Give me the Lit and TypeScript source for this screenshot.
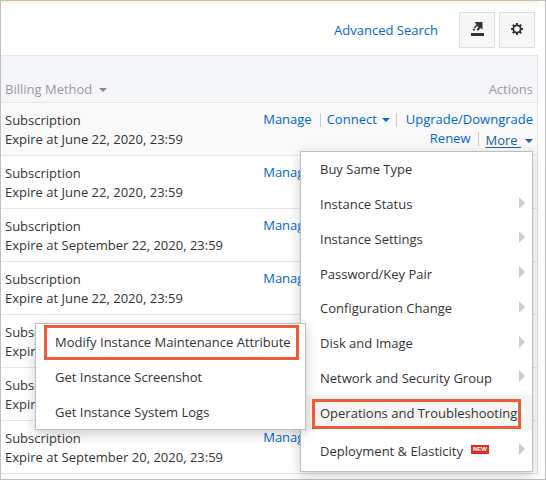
import { LitElement, html, css, nothing, svg } from "lit";
import { customElement, property } from "lit/decorators.js";
import { classMap } from "lit/directives/class-map.js";

interface MenuEntry {
  label: string;
  leaf?: boolean;
  active?: boolean;
  isNew?: boolean;
}

const MENU: MenuEntry[] = [
  { label: "Buy Same Type", leaf: true },
  { label: "Instance Status" },
  { label: "Instance Settings" },
  { label: "Password/Key Pair" },
  { label: "Configuration Change" },
  { label: "Disk and Image" },
  { label: "Network and Security Group" },
  { label: "Operations and Troubleshooting", active: true },
  { label: "Deployment & Elasticity", isNew: true },
];

const SUBMENU = [
  "Modify Instance Maintenance Attribute",
  "Get Instance Screenshot",
  "Get Instance System Logs",
];

const EXPIRY = [
  "June 22, 2020, 23:59",
  "June 22, 2020, 23:59",
  "September 22, 2020, 23:59",
  "June 22, 2020, 23:59",
  "June 22, 2020, 23:59",
  "June 22, 2020, 23:59",
  "September 20, 2020, 23:59",
];

@customElement("actions-menu")
export class ActionsMenu extends LitElement {
  static styles = css`
    :host {
      display: block;
      box-sizing: border-box;
      width: 233px;
      background: #fff;
      border: 1px solid #bfbfbf;
      box-shadow: 0 4px 12px rgba(0, 0, 0, 0.2);
      color: #333;
      text-align: left;
    }
    ul {
      list-style: none;
      margin: 0;
      padding: 0;
    }
    .main {
      display: grid;
      grid-template-rows: repeat(8, 1fr) 41px;
      min-height: 319px;
    }
    .item {
      position: relative;
      display: grid;
    }
    .item.active {
      background: #f5f5f5;
    }
    .entry {
      display: flex;
      align-items: center;
      min-height: 34px;
      width: 100%;
      padding: 1px 7px 0 19px;
      border: 0;
      background: none;
      font: inherit;
      line-height: 19px;
      color: inherit;
      text-align: left;
      white-space: nowrap;
      box-sizing: border-box;
      cursor: pointer;
    }
    .arrow {
      margin-left: auto;
      margin-bottom: 4px;
      border: 6px solid transparent;
      border-left-color: #ccc;
      border-right-width: 0;
    }
    .active .arrow {
      border-left-color: #fff;
    }
    .new {
      margin-left: 8px;
      margin-bottom: 4px;
      width: 18px;
      background: #d93026;
      color: #fff;
      font: bold 6px/9px "Liberation Sans", sans-serif;
      text-align: center;
    }
    .submenu {
      position: absolute;
      right: 100%;
      bottom: 0;
      margin-right: -5px;
      width: 271px;
      box-sizing: border-box;
      background: #fff;
      border: 1px solid #bfbfbf;
      box-shadow: 0 4px 12px rgba(0, 0, 0, 0.2);
    }
    .submenu .item {
      min-height: 35px;
    }
    .mark::after {
      content: "";
      position: absolute;
      inset: 1px 6px -1px 8px;
      border: 3px solid #f05a36;
      pointer-events: none;
    }
    .mark.active::after {
      inset: 4px 11px 1px 11px;
    }
  `;

  private submenu() {
    return html`<ul class="submenu">
      ${SUBMENU.map(
        (label, i) => html`<li class=${classMap({ item: true, mark: i === 0 })}>
          <button class="entry" type="button">${label}</button>
        </li>`
      )}
    </ul>`;
  }

  render() {
    return html`<ul class="main">
      ${MENU.map(
        (m) => html`<li class=${classMap({ item: true, active: !!m.active, mark: !!m.active })}>
          <button class="entry" type="button">
            ${m.label}${m.isNew ? html`<span class="new">NEW</span>` : nothing}
            ${m.leaf ? nothing : html`<span class="arrow"></span>`}
          </button>
          ${m.active ? this.submenu() : nothing}
        </li>`
      )}
    </ul>`;
  }
}

@customElement("row-actions")
export class RowActions extends LitElement {
  @property({ type: Boolean }) open = false;

  static styles = css`
    :host {
      display: block;
      position: relative;
    }
    .line {
      display: flex;
      justify-content: flex-end;
      align-items: center;
      line-height: 19px;
      white-space: nowrap;
    }
    a,
    button {
      color: #06c;
      font: inherit;
      line-height: 19px;
      text-decoration: none;
      background: none;
      border: 0;
      padding: 0;
      cursor: pointer;
    }
    .drop {
      display: flex;
      align-items: center;
      gap: 5px;
    }
    .drop::after {
      content: "";
      border: 4px solid transparent;
      border-top-color: currentColor;
      border-bottom-width: 0;
    }
    .more {
      gap: 4px;
      padding-top: 2px;
      margin-bottom: -2px;
    }
    .more.open {
      color: #23609c;
    }
    .more.open span {
      text-decoration: underline;
      text-underline-offset: 2px;
      white-space: pre;
    }
    .sep {
      width: 1px;
      height: 14px;
      background: #ccc;
      margin: 0 6px 0 8px;
    }
    .sep.tight {
      margin: 0 9px 0 6px;
    }
    actions-menu {
      position: absolute;
      z-index: 2;
      top: 41px;
      right: 0;
    }
  `;

  render() {
    return html`
      <div class="line">
        <a href="#manage">Manage</a><span class="sep"></span>
        <button class="drop" type="button">Connect</button><span class="sep tight"></span>
        <a href="#resize">Upgrade/Downgrade</a>
      </div>
      <div class="line">
        <a href="#renew">Renew</a><span class="sep"></span>
        <button class=${classMap({ drop: true, more: true, open: this.open })} type="button"><span>More </span></button>
      </div>
      ${this.open ? html`<actions-menu></actions-menu>` : nothing}
    `;
  }
}

const gearTeeth = [0, 45, 90, 135, 180, 225, 270, 315].map(
  (a) => svg`<rect x="5" y="0" width="2" height="3" transform="rotate(${a} 6 6)"/>`
);

@customElement("app-root")
export class AppRoot extends LitElement {
  static styles = css`
    :host {
      display: block;
      box-sizing: border-box;
      min-height: 100vh;
      padding-right: 7px;
      border: 1px solid #bfbfbf;
      background: #fff;
      color: #333;
      font-family: "Open Sans", "Noto Sans", sans-serif;
      font-size: 13px;
      line-height: 19px;
    }
    .bar {
      display: flex;
      align-items: center;
      justify-content: flex-end;
      gap: 4px;
      height: 54px;
      box-sizing: border-box;
      padding: 2px 3px 0 0;
      border-top: 2px solid #fdf3da;
    }
    .search {
      color: #06c;
      text-decoration: none;
      margin-right: 17px;
    }
    .tool {
      display: grid;
      place-items: center;
      width: 36px;
      height: 36px;
      padding: 0 0 2px;
      border: 1px solid #ddd;
      background: #f7f7f7;
      color: #333;
      cursor: pointer;
    }
    table {
      width: 100%;
      border-collapse: separate;
      border-spacing: 0;
      border-top: 1px solid #e1e6eb;
      border-right: 1px solid #e1e6eb;
    }
    th,
    td {
      padding: 7px 4px;
      border-bottom: 1px solid #e1e6eb;
      vertical-align: top;
      text-align: left;
      white-space: nowrap;
    }
    .billing {
      padding: 8px 4px 6px;
    }
    th {
      padding: 24px 4px 3px;
      background: #f5f6fa;
      color: #999;
      font-weight: normal;
    }
    .right {
      text-align: right;
    }
    .sort {
      display: flex;
      align-items: center;
      gap: 7px;
      padding: 0;
      border: 0;
      background: none;
      color: inherit;
      font: inherit;
      cursor: pointer;
    }
    .sort::after {
      content: "";
      border: 4px solid transparent;
      border-top-color: #888;
      border-bottom-width: 0;
    }
    .current td {
      background: #f9f9f9;
    }
  `;

  render() {
    return html`
      <div class="bar">
        <a class="search" href="#search">Advanced Search</a>
        <button class="tool" type="button" aria-label="Export">
          <svg width="14" height="14" viewBox="0 0 14 14" fill="currentColor">
            <path d="M4.500 0H12.500V7.500L10.500 6L8 9L6.500 7.800L8.500 5L7 4L5.500 6L3.500 5.500L6.500 2.500Z" />
            <path d="M3 7L5 6.500V8.500H3Z" />
            <path d="M1 11H14V14H1Z" />
          </svg>
        </button>
        <button class="tool" type="button" aria-label="Settings">
          <svg width="12" height="12" viewBox="0 0 12 12" fill="currentColor">
            ${gearTeeth}
            <circle cx="6" cy="6" r="3.700" fill="none" stroke="currentColor" stroke-width="1.800" />
          </svg>
        </button>
      </div>
      <table>
        <thead>
          <tr>
            <th><button class="sort" type="button">Billing Method</button></th>
            <th class="right">Actions</th>
          </tr>
        </thead>
        <tbody>
          ${EXPIRY.map(
            (date, i) => html`<tr class=${classMap({ current: i === 0 })}>
              <td class="billing">Subscription<br />Expire at ${date}</td>
              <td><row-actions ?open=${i === 0}></row-actions></td>
            </tr>`
          )}
        </tbody>
      </table>
    `;
  }
}
